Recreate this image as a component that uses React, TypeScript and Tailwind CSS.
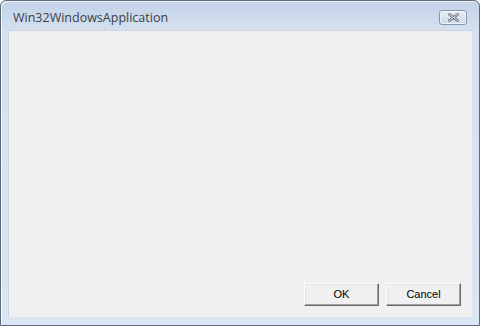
export default function App() {
  return (
    <div className="w-[480px] h-[326px] bg-white">
      <div className="flex h-full w-full flex-col rounded-t-[6px] border border-[#5f6b7a] bg-[linear-gradient(to_bottom,#c2d2e6_0px,#d5e1f0_30px,#dbe6f3_100%)] shadow-[inset_1px_1px_0_rgba(255,255,255,0.7)]">
        <div className="flex h-[29px] shrink-0 items-center justify-between pl-[12px] pr-[12px]">
          <span className="font-['Open_Sans','Noto_Sans',sans-serif] text-[12.5px] leading-none text-[#3a4048] pt-[5px]">
            Win32WindowsApplication
          </span>
          <button className="mt-[4px] flex h-[15px] w-[28px] items-center justify-center rounded-[3px] border border-[#8796ab] bg-[linear-gradient(to_bottom,#e3ebf5,#cfdbea)] shadow-[inset_0_0_0_1px_rgba(255,255,255,0.6)]">
            <svg width="11" height="9" viewBox="0 0 11 9">
              <path d="M1.5 1.5 L9.5 7.5 M9.5 1.5 L1.5 7.5" stroke="#5a6270" strokeWidth="2.6" strokeLinecap="round" />
              <path d="M1.5 1.5 L9.5 7.5 M9.5 1.5 L1.5 7.5" stroke="#f4f6f9" strokeWidth="1" strokeLinecap="round" />
            </svg>
          </button>
        </div>
        <div className="mx-[7px] mb-[8px] flex flex-1 items-end justify-end gap-[7px] border-t border-l border-[#c9d3df] bg-[#f0f0f0] pb-[11px] pr-[11px]">
          <WinButton label="OK" />
          <WinButton label="Cancel" />
        </div>
      </div>
    </div>
  );
}

function WinButton({ label }: { label: string }) {
  return (
    <button className="h-[23px] w-[75px] border-t border-l border-white border-r border-b border-r-[#696969] border-b-[#696969] bg-[#f0f0f0] shadow-[inset_-1px_-1px_0_#a0a0a0,inset_1px_1px_0_#e3e3e3] font-['Liberation_Sans',Arial,sans-serif] text-[11px] text-black">
      {label}
    </button>
  );
}
